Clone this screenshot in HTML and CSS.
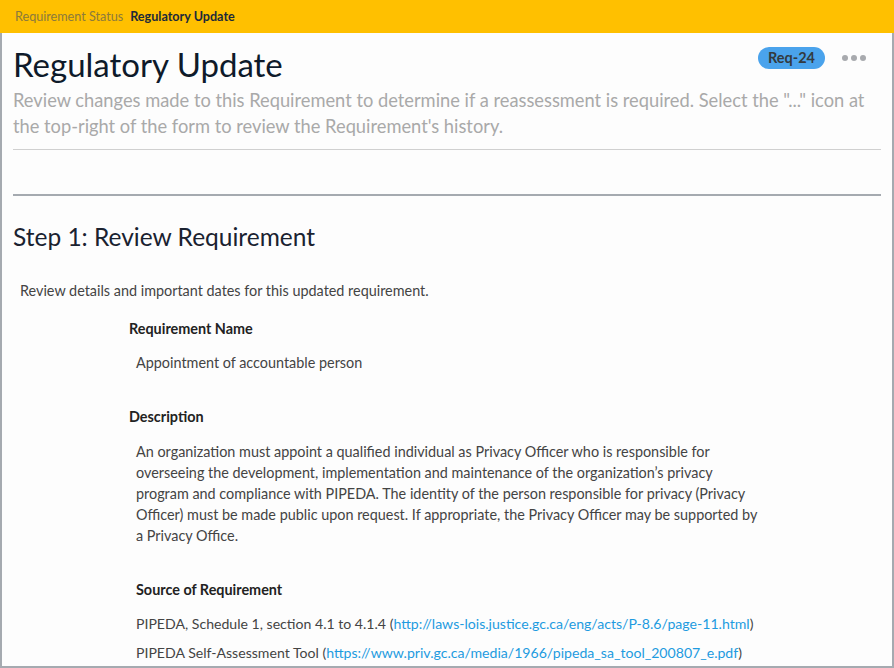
FILE: index.html
```html
<!DOCTYPE html>
<html>
<head>
    <title>Regulatory Update</title>
    <link rel="stylesheet" href="styles.css">
</head>
<body>
    <div class="status_bar">
        <span class="status_label">Requirement Status</span>
        <span class="status_value">Regulatory Update</span>
    </div>
    <div class="frame">
        <div class="form_head">
            <div class="head_row">
                <h1>Regulatory Update</h1>
                <div class="head_tools">
                    <span class="badge">Req-24</span>
                    <span class="dots"><i></i><i></i><i></i></span>
                </div>
            </div>
            <p class="intro">Review changes made to this Requirement to determine if a reassessment is required. Select the "..." icon at the top-right of the form to review the Requirement's history.</p>
        </div>
        <div class="step">
            <h2>Step 1: Review Requirement</h2>
            <p class="step_text">Review details and important dates for this updated requirement.</p>
            <div class="fields">
                <div class="field">
                    <div class="field_label">Requirement Name</div>
                    <div class="field_value">Appointment of accountable person</div>
                </div>
                <div class="field">
                    <div class="field_label">Description</div>
                    <div class="field_value desc">An organization must appoint a qualified individual as Privacy Officer who is responsible for overseeing the development, implementation and maintenance of the organization’s privacy program and compliance with PIPEDA. The identity of the person responsible for privacy (Privacy Officer) must be made public upon request. If appropriate, the Privacy Officer may be supported by a Privacy Office.</div>
                </div>
                <div class="field source">
                    <div class="field_label">Source of Requirement</div>
                    <p>PIPEDA, Schedule 1, section 4.1 to 4.1.4 (<a href="#">http://laws-lois.justice.gc.ca/eng/acts/P-8.6/page-11.html</a>)</p>
                    <p>PIPEDA Self-Assessment Tool (<a href="#">https://www.priv.gc.ca/media/1966/pipeda_sa_tool_200807_e.pdf</a>)</p>
                </div>
            </div>
        </div>
    </div>
</body>
</html>
```

FILE: styles.css
```css
html, body {
    margin: 0;
    height: 100%;
}

body {
    background-color: #fdfdfd;
    font-family: Lato, "Open Sans", Arial, sans-serif;
    color: #333333;
    display: flex;
    flex-direction: column;
    overflow: hidden;
}

.status_bar {
    background-color: #ffc000;
    height: 33px;
    display: flex;
    align-items: center;
    padding-left: 15px;
    font-size: 12.6px;
    flex-shrink: 0;
}

.status_label {
    color: #8c7a3c;
    margin-right: 7px;
}

.status_value {
    color: #1c2a3a;
    font-weight: bold;
}

.frame {
    flex: 1;
    border-left: 2px solid #a5aab0;
    border-right: 2px solid #a5aab0;
    border-bottom: 2px solid #a5aab0;
    padding: 0 11px 0 11px;
    overflow: hidden;
}

.form_head {
    border-bottom: 1px solid #d0d0d0;
    padding-bottom: 10px;
}

.head_row {
    display: flex;
    justify-content: space-between;
    align-items: flex-start;
}

h1 {
    font-weight: normal;
    font-size: 33px;
    color: #0e1a2a;
    margin: 11px 0 0 0;
    line-height: 40px;
}

.head_tools {
    display: flex;
    align-items: center;
    margin-top: 14px;
}

.badge {
    background-color: #4aa3ec;
    color: #333a40;
    font-weight: bold;
    font-size: 14.5px;
    padding: 2px 10px;
    border-radius: 11px;
    line-height: 18px;
}

.dots {
    display: flex;
    margin-left: 17px;
    margin-right: 12px;
}

.dots i {
    width: 6px;
    height: 6px;
    border-radius: 50%;
    background-color: #a8aaae;
    margin-right: 3px;
}

.intro {
    color: #a9a9a9;
    font-size: 18.3px;
    line-height: 26px;
    margin: 3px 0 0 0;
}

.step {
    border-top: 2px solid #a5aab0;
    margin-top: 44px;
}

h2 {
    font-weight: normal;
    font-size: 24.5px;
    color: #1a2230;
    margin: 26px 0 0 0;
    line-height: 30px;
}

.step_text {
    font-size: 14.4px;
    color: #444444;
    margin: 30px 0 0 7px;
}

.fields {
    margin-left: 116px;
    font-size: 14.4px;
    margin-top: 20px;
}

.field_label {
    font-weight: bold;
    color: #222222;
    line-height: 20px;
}

.field_value {
    color: #444444;
    margin: 14px 0 0 7px;
    line-height: 20px;
}

.field + .field {
    margin-top: 34px;
}

.desc {
    line-height: 21px;
    max-width: 624px;
}

.source {
    margin-left: 7px;
}

.source p {
    margin: 14px 0 0 0;
    color: #444444;
    line-height: 20px;
    font-size: 14.1px;
}

.source p + p {
    margin-top: 9px;
}

.source a {
    color: #1e9be0;
    text-decoration: none;
}
```
